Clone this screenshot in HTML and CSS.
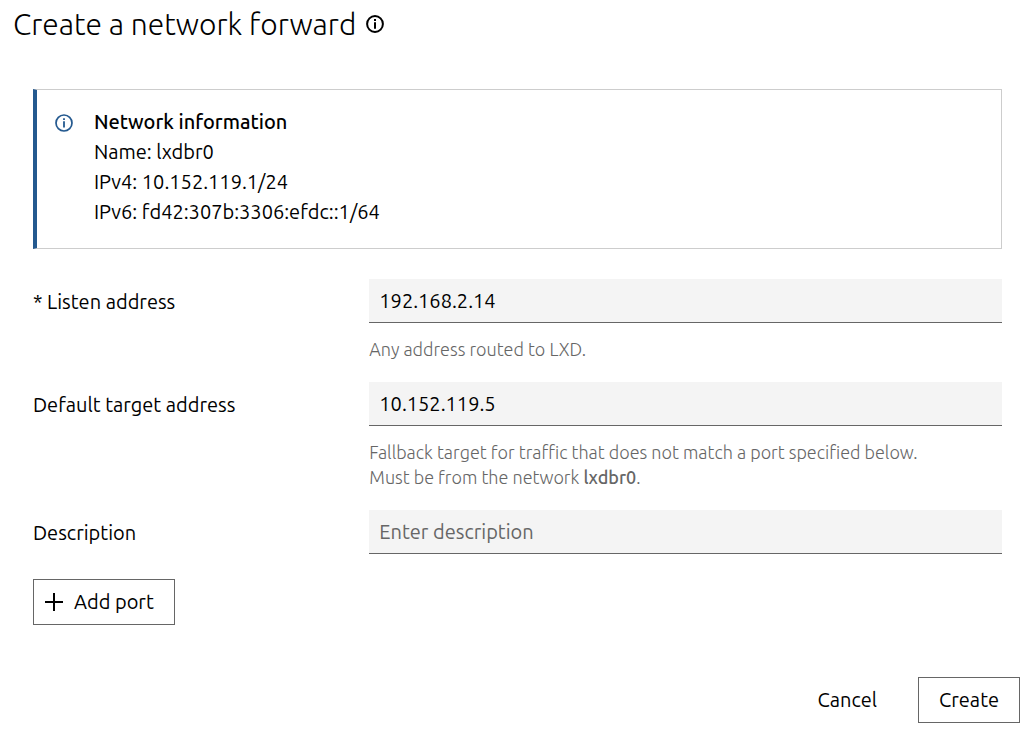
FILE: index.html
```
<!DOCTYPE html>
<html lang="en">
<head>
	<meta charset="UTF-8">
	<meta name="viewport" content="width=device-width, initial-scale=1">
	<title>Create a network forward</title>
	<link rel="stylesheet" href="styles.css">
</head>
<body>
	<header class="page-header">
		<h1>Create a network forward</h1>
		<svg class="icon" viewBox="0 0 18 18" aria-hidden="true">
			<circle cx="9" cy="9" r="7.9" fill="none" stroke="currentColor" stroke-width="2"/>
			<path d="M8 4h2v2H8zM8 7.200h2v6.600H8z" fill="currentColor"/>
		</svg>
	</header>
	<form>
		<main class="content">
			<section class="notification">
				<svg class="icon" viewBox="0 0 18 18" aria-hidden="true">
					<circle cx="9" cy="9" r="8" fill="none" stroke="currentColor" stroke-width="1.700"/>
					<path d="M8.100 4.200h1.800v1.800H8.100zM8.100 7.200h1.800v6.300H8.100z" fill="currentColor"/>
				</svg>
				<div>
					<h2>Network information</h2>
					<p>Name: lxdbr0</p>
					<p>IPv4: 10.152.119.1/24</p>
					<p>IPv6: fd42:307b:3306:efdc::1/64</p>
				</div>
			</section>
			<div class="row">
				<label for="listen">* Listen address</label>
				<div class="control">
					<input type="text" id="listen" value="192.168.2.14" required>
					<p class="help">Any address routed to LXD.</p>
				</div>
			</div>
			<div class="row">
				<label for="target">Default target address</label>
				<div class="control">
					<input type="text" id="target" value="10.152.119.5">
					<p class="help">Fallback target for traffic that does not match a port specified below.<br>Must be from the network <strong>lxdbr0</strong>.</p>
				</div>
			</div>
			<div class="row">
				<label for="description">Description</label>
				<div class="control">
					<input type="text" id="description" placeholder="Enter description">
				</div>
			</div>
			<button type="button" class="btn add-port">
				<svg class="icon" viewBox="0 0 18 18" aria-hidden="true">
					<path d="M8 0h2v8h8v2h-8v8H8v-8H0V8h8z" fill="currentColor"/>
				</svg>
				<span>Add port</span>
			</button>
		</main>
		<footer class="actions">
			<button type="button" class="btn btn-base">Cancel</button>
			<button type="submit" class="btn">Create</button>
		</footer>
	</form>
</body>
</html>
```
FILE: styles.css
```
*{
	box-sizing: border-box;
	margin: 0;
	padding: 0;
}
body{
	padding: 4px 13px 16px;
	background-color: #fff;
	color: #000;
	font-family: Ubuntu, "Noto Sans", sans-serif;
	font-size: 20px;
	line-height: 30px;
}
.icon{
	flex: none;
	width: 18px;
	height: 18px;
}

.page-header{
	display: flex;
	align-items: center;
	gap: 10px;
	margin-bottom: 45px;
}
h1{
	font-size: 30px;
	font-weight: 300;
	line-height: 40px;
}

.content{
	padding: 0 18px 0 20px;
}
.notification{
	display: flex;
	gap: 21px;
	margin-bottom: 30px;
	padding: 17px 18px 21px;
	border: 1px solid #cdcdcd;
	border-left: 4px solid #24598f;
}
.notification .icon{
	margin-top: 7px;
	color: #24598f;
}
h2{
	font-size: 20px;
	font-weight: 500;
	line-height: 30px;
}

.row{
	display: grid;
	grid-template-columns: 1fr 2fr;
	gap: 20px;
	margin-bottom: 20px;
}
.row label{
	padding-top: 8px;
}
input{
	display: block;
	width: 100%;
	height: 44px;
	padding: 0 10px;
	border: 0;
	border-bottom: 1px solid #666;
	border-radius: 0;
	background-color: #f4f4f4;
	color: #000;
	font: inherit;
}
input::placeholder{
	color: #666;
	opacity: 1;
}
.help{
	margin-top: 14px;
	color: #666;
	font-size: 18px;
	font-weight: 300;
	line-height: 25px;
}
.help strong{
	font-weight: 500;
}

.btn{
	height: 46px;
	padding: 0 20px;
	border: 1px solid #666;
	background-color: #fff;
	color: #000;
	font: inherit;
	cursor: pointer;
}
.btn-base{
	border-color: transparent;
}
.add-port{
	display: flex;
	align-items: center;
	gap: 11px;
	margin-top: 25px;
	padding-left: 11px;
}
.actions{
	display: flex;
	justify-content: flex-end;
	gap: 20px;
	margin-top: 52px;
}
```
